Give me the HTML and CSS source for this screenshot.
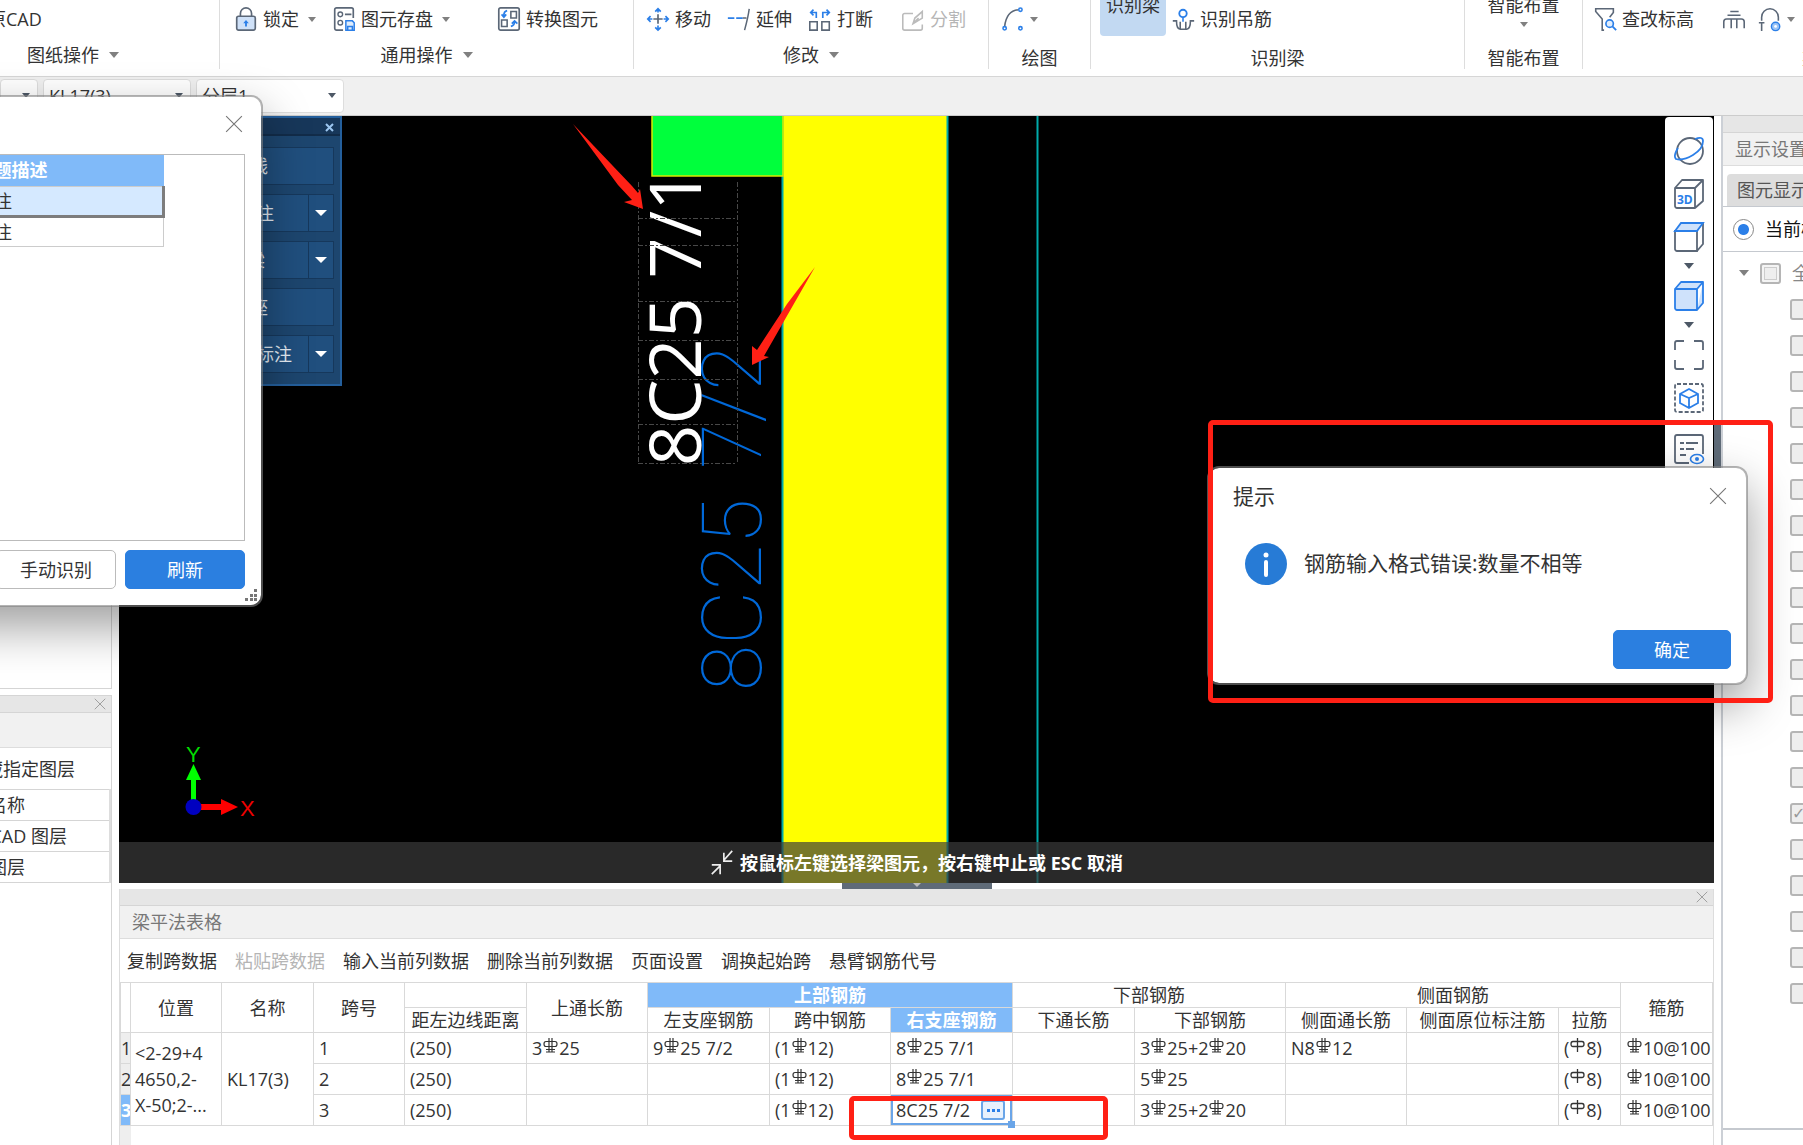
FILE: index.html
```html
<!DOCTYPE html>
<html lang="zh-CN">
<head>
<meta charset="utf-8">
<title>梁平法表格</title>
<link rel="stylesheet" href="styles.css">
</head>
<body>
<svg class="defs" aria-hidden="true">
  <symbol id="bar-c" viewBox="0 0 15 16"><path d="M3 3.500H12Q14 3.500 14 6T12 8.500H3Q1 8.500 1 6T3 3.500ZM6 0V14M9 0V14M3 11.500H12M3 14H12" fill="none" stroke="#333" stroke-width="1.200"/></symbol>
  <symbol id="bar-a" viewBox="0 0 15 16"><path d="M3 3.500H12Q14 3.500 14 6T12 8.500H3Q1 8.500 1 6T3 3.500ZM7.500 0V14" fill="none" stroke="#333" stroke-width="1.300"/></symbol>
  <symbol id="cross" viewBox="0 0 16 16"><path d="M1 1L15 15M15 1L1 15" fill="none" stroke="currentColor"/></symbol>
</svg>
<div class="app">
  <header class="ribbon">
    <section class="group g-paper">
      <div class="tools"><button class="tool">原CAD</button></div>
      <button class="caption">图纸操作<i class="tri big"></i></button>
    </section>
    <section class="group g-common">
      <div class="tools">
        <button class="tool"><svg class="ico" viewBox="0 0 24 28"><path d="M6 12V8a6 6 0 0 1 12 0v4" fill="none" stroke="#5b6777" stroke-width="1.800"/><rect x="2" y="11" width="20" height="15" rx="2" fill="#cfe1f8" stroke="#5b6777" stroke-width="1.800"/><path d="M12 15l3 3.500h-2V22h-2v-3.500H9z" fill="#2b7fe8"/></svg>锁定<i class="tri"></i></button>
        <button class="tool"><svg class="ico" viewBox="0 0 24 28"><path d="M11 26H4a2 2 0 0 1-2-2V4a2 2 0 0 1 2-2h16a2 2 0 0 1 2 2v9M13 9h7" fill="none" stroke="#5b6777" stroke-width="1.800"/><circle cx="8" cy="9" r="2.500" fill="none" stroke="#5b6777" stroke-width="1.500"/><circle cx="8" cy="18" r="2.500" fill="none" stroke="#5b6777" stroke-width="1.500"/><path d="M14 16h7l2 2v8h-9zM16 26v-4h5v4" fill="#e0edfc" stroke="#2b7fe8" stroke-width="1.600"/></svg>图元存盘<i class="tri"></i></button>
        <button class="tool t-convert"><svg class="ico" viewBox="0 0 24 28"><rect x="1" y="2" width="22" height="24" rx="2" fill="#fff" stroke="#5b6777" stroke-width="1.800"/><path d="M14 6h6v7h-6zM4 15h6v7H4z" fill="none" stroke="#5b6777" stroke-width="1.700"/><path d="M10 5Q6 6 6.500 11M4 9l2.500 3L9 9M14 22q4-1 4-5M15 19l3-3 3 3" fill="none" stroke="#2b7fe8" stroke-width="1.800"/></svg>转换图元</button>
      </div>
      <button class="caption">通用操作<i class="tri big"></i></button>
    </section>
    <section class="group g-modify">
      <div class="tools">
        <button class="tool"><svg class="ico" viewBox="0 0 24 28"><path d="M12 9v10M7 14h10" stroke="#5b6777" stroke-width="1.800"/><path d="M12 3v4M9 6l3-3 3 3M12 21v5M9 23l3 3 3-3M1.500 14H6M4 11l-3 3 3 3M18 14h5M20 11l3 3-3 3" fill="none" stroke="#2b7fe8" stroke-width="1.800"/></svg>移动</button>
        <button class="tool"><svg class="ico" viewBox="0 0 24 28"><path d="M0 13h7M9 13h7" stroke="#2b7fe8" stroke-width="1.800"/><path d="M23 3q-1 8-5 23M16 13h4" fill="none" stroke="#5b6777" stroke-width="1.600"/></svg>延伸</button>
        <button class="tool"><svg class="ico" viewBox="0 0 24 28"><path d="M1 17h8v9H1zM14 17h8v9h-8z" fill="none" stroke="#5b6777" stroke-width="1.700"/><path d="M8 13V7H2M5 4L2 7l3 3M15 13V7h7M19 4l3 3-3 3" fill="none" stroke="#2b7fe8" stroke-width="1.800"/></svg>打断</button>
        <button class="tool t-split" disabled><svg class="ico" viewBox="0 0 24 28"><path d="M12 8H3a2 2 0 0 0-2 2v14a2 2 0 0 0 2 2h17a2 2 0 0 0 2-2v-4M12 19l2-6 8-7v7zM12 19l6-6" fill="none" stroke="#bbb" stroke-width="1.700"/></svg>分割</button>
      </div>
      <button class="caption">修改<i class="tri big"></i></button>
    </section>
    <section class="group g-draw">
      <div class="tools"><button class="tool" aria-label="弧线"><svg class="ico" viewBox="0 0 24 28"><path d="M3 22Q5 5 18 4" fill="none" stroke="#5b6777" stroke-width="1.700"/><g fill="#fff" stroke="#2b7fe8" stroke-width="1.700"><circle cx="3" cy="24" r="1.800"/><circle cx="20" cy="4" r="1.800"/><circle cx="20" cy="24" r="1.800"/></g></svg><i class="tri"></i></button></div>
      <span class="caption low">绘图</span>
    </section>
    <section class="group g-identify">
      <div class="tools">
        <button class="tall active">识别梁</button>
        <button class="tool"><svg class="ico" viewBox="0 0 24 28"><circle cx="12" cy="8" r="4" fill="none" stroke="#2b7fe8" stroke-width="2"/><path d="M12 12v5" stroke="#2b7fe8" stroke-width="1.700"/><path d="M1 16h4q0 9 4 9h7q4 0 4-9h4M9 17v8M15 17v8" fill="none" stroke="#5b6777" stroke-width="1.700"/></svg>识别吊筋</button>
      </div>
      <span class="caption low">识别梁</span>
    </section>
    <section class="group g-smart">
      <div class="tools"><button class="tall">智能布置<i class="tri"></i></button></div>
      <span class="caption low">智能布置</span>
    </section>
    <section class="group g-second">
      <div class="tools">
        <button class="tool"><svg class="ico" viewBox="0 0 24 28"><path d="M11 26H9V14L2 6V3h19v4l-4 5" fill="none" stroke="#5b6777" stroke-width="1.700"/><circle cx="17" cy="19" r="4" fill="#e0edfc" stroke="#2b7fe8" stroke-width="1.800"/><path d="M20 22l4 4" stroke="#2b7fe8" stroke-width="2"/></svg>查改标高</button>
        <button class="tool" aria-label="支座"><svg class="ico" viewBox="0 0 24 28"><path d="M8 6h9M5 10h14M1 24V17q0-3 3-3h16q3 0 3 3v7M9 14v10M15 14v10" fill="none" stroke="#5b6777" stroke-width="1.700"/></svg></button>
        <button class="tool" aria-label="吊筋设置"><svg class="ico" viewBox="0 0 24 28"><path d="M3 16V12a9 9 0 0 1 18 0v4M0 18h6M3 18v9" fill="none" stroke="#5b6777" stroke-width="1.700"/><circle cx="18" cy="22" r="4.500" fill="#9cc4f5" stroke="#2b7fe8" stroke-width="1.500"/><circle cx="18" cy="22" r="1.500" fill="#fff"/></svg><i class="tri"></i></button>
      </div>
      <span class="caption low">梁</span>
    </section>
  </header>

  <nav class="pickers">
    <label class="picker"><select aria-label="构件类型"><option></option></select></label>
    <label class="picker"><select aria-label="构件"><option>KL17(3)</option></select></label>
    <label class="picker"><select aria-label="分层"><option>分层1</option></select></label>
  </nav>

  <main class="work">
    <aside class="left">
      <div class="list-box"></div>
      <section class="layers">
        <div class="strip"><button class="x" aria-label="关闭"><svg><use href="#cross"/></svg></button></div>
        <div class="blank"></div>
        <p class="layer-tool"><span>隐藏指定图层</span></p>
        <table class="layer-table">
          <tr><th><span>名称</span></th></tr>
          <tr><td><span class="wide">CAD 图层</span></td></tr>
          <tr><td><span>图层</span></td></tr>
        </table>
      </section>
    </aside>

    <div class="center">
      <section class="view">
        <svg class="scene">
          <rect x="664" width="164" height="100%" fill="#ff0"/>
          <path d="M663.500 0V2000M828.500 0V2000M918.500 0V2000" stroke="#0aa" stroke-width="2"/>
          <rect x="533" y="-1" width="131" height="61" fill="#00ff3c" stroke="#d8e800" stroke-width="1.500"/>
          <g class="cad-text">
            <text transform="translate(642 575) rotate(-90)">8C25</text>
            <text transform="translate(642 353) rotate(-90)">7/2</text>
          </g>
          <text class="note-text" transform="translate(582 350) rotate(-90)">8C25 7/1</text>
          <path d="M519.500 66V347M618.500 66V347M519 102.500H618M519 129.500H618M519 185.500H618M519 224.500H618M519 263.500H618M519 308.500H618M519 347.500H618" fill="none" stroke="#484848" stroke-dasharray="5 2 2 2"/>
          <path d="M454 8L513 70L519 77L521 73L524 93L505 86L513 84L499 69ZM696 151L645 240L650 241L633 249V230L638 234L668 188Z" fill="#ff2015"/>
        </svg>
        <svg class="axis" viewBox="0 0 100 90">
          <path d="M17 64V34H12L19.500 18L27 34H22V64Z" fill="#0f0"/>
          <path d="M20 58H47V53L64 61L47 69V64H20Z" fill="red"/>
          <circle cx="19.500" cy="61" r="8" fill="#0000c0"/>
          <text x="12" y="16" fill="#0d0">Y</text><text x="66" y="70" fill="#e00">X</text>
        </svg>
        <section class="command">
          <div class="command-head"><button aria-label="关闭"><svg viewBox="0 0 9 9"><path d="M1 1L8 8M8 1L1 8" stroke="#9cc6f0" stroke-width="2"/></svg></button></div>
          <div class="command-row"><button>梁边线</button></div>
          <div class="command-row"><button class="w2">自动标注</button><button class="drop" aria-label="更多"></button></div>
          <div class="command-row"><button class="w1">识别梁</button><button class="drop" aria-label="更多"></button></div>
          <div class="command-row"><button>编辑支座</button></div>
          <div class="command-row"><button class="w3">原位标注</button><button class="drop" aria-label="更多"></button></div>
        </section>
        <nav class="view-tools">
          <button aria-label="动态观察"><svg viewBox="0 0 32 32"><circle cx="17" cy="16" r="13" fill="none" stroke="#5b6777" stroke-width="1.800"/><path d="M22 4q8-3 8 2 0 8-10 14T3 24Q0 21 5 13" fill="none" stroke="#2b7fe8" stroke-width="1.800"/></svg></button>
          <button aria-label="三维"><svg viewBox="0 0 32 32"><path d="M2 10H22V30H4a2 2 0 0 1-2-2ZM2 10L9 2H30L22 10M30 2V23L22 30" fill="#fff" stroke="#5b6777" stroke-width="1.800" stroke-linejoin="round"/><text x="4" y="26">3D</text></svg></button>
          <button aria-label="俯视"><svg viewBox="0 0 32 32"><path d="M2 10H24V30H4a2 2 0 0 1-2-2ZM30 2V23L24 30" fill="#fff" stroke="#5b6777" stroke-width="1.800"/><path d="M2 10L8 2H30L24 10Z" fill="#cfe2fb" stroke="#2b7fe8" stroke-width="1.800"/></svg></button>
          <i class="tri dark"></i>
          <button aria-label="着色"><svg viewBox="0 0 32 32"><path d="M2 9H24V30H4a2 2 0 0 1-2-2ZM2 9L8 2H30L24 9M30 2V23L24 30" fill="#cfe2fb" stroke="#2b7fe8" stroke-width="1.800" stroke-linejoin="round"/></svg></button>
          <i class="tri dark"></i>
          <button aria-label="全屏"><svg viewBox="0 0 32 32"><path d="M2 11V4q0-2 2-2h7M21 2h7q2 0 2 2v7M30 21v7q0 2-2 2h-7M11 30H4q-2 0-2-2v-7" fill="none" stroke="#5b6777" stroke-width="1.800"/></svg></button>
          <button class="last" aria-label="局部三维"><svg viewBox="0 0 32 32"><rect x="2" y="2" width="28" height="28" rx="2" fill="none" stroke="#5b6777" stroke-width="1.800" stroke-dasharray="4 2"/><path d="M16 7l9 5v9l-9 5-9-5v-9zM7 12l9 4 9-4M16 16v10" fill="none" stroke="#2b7fe8" stroke-width="1.800"/></svg></button>
          <button aria-label="显示列表"><svg viewBox="0 0 32 32"><path d="M16 30H4q-2 0-2-2V4q0-2 2-2h24q2 0 2 2v17M7 10h4M13 10h12M7 16h4M13 16h8M7 22h6" fill="none" stroke="#5b6777" stroke-width="1.800"/><ellipse cx="24" cy="26" rx="6.500" ry="4.500" fill="#fff" stroke="#2b7fe8" stroke-width="1.600"/><circle cx="24" cy="26" r="2" fill="#2b7fe8"/></svg></button>
        </nav>
        <p class="prompt"><svg viewBox="0 0 24 28"><path d="M23 1L14 11M14 3v9h9M1 26l9-9M1 16h9v10" fill="none" stroke="#eee" stroke-width="1.800"/></svg>按鼠标左键选择梁图元，按右键中止或 ESC 取消</p>
      </section>
      <div class="grip-h"></div>
      <section class="sheet">
        <div class="strip"><button class="x" aria-label="关闭"><svg><use href="#cross"/></svg></button></div>
        <h2>梁平法表格</h2>
        <div class="actions">
          <button>复制跨数据</button><button disabled>粘贴跨数据</button><button>输入当前列数据</button><button>删除当前列数据</button><button>页面设置</button><button>调换起始跨</button><button>悬臂钢筋代号</button>
        </div>
        <table class="rebar">
          <colgroup><col class="c10"><col class="c91"><col class="c92"><col class="c91"><col class="c122"><col class="c121"><col class="c122"><col class="c121"><col class="c122"><col class="c122"><col class="c151"><col class="c121"><col class="c152"><col class="c62"><col class="c92"><col></colgroup>
          <thead>
            <tr class="h1"><th rowspan="2"></th><th rowspan="2">位置</th><th rowspan="2">名称</th><th rowspan="2">跨号</th><th></th><th rowspan="2">上通长筋</th><th colspan="3" class="on">上部钢筋</th><th colspan="2">下部钢筋</th><th colspan="3">侧面钢筋</th><th rowspan="2">箍筋</th><th rowspan="2"></th></tr>
            <tr class="h2"><th>距左边线距离</th><th>左支座钢筋</th><th>跨中钢筋</th><th class="on">右支座钢筋</th><th>下通长筋</th><th>下部钢筋</th><th>侧面通长筋</th><th>侧面原位标注筋</th><th>拉筋</th></tr>
          </thead>
          <tbody>
            <tr><th>1</th><td rowspan="3" class="place">&lt;2-29+4<br>4650,2-<br>X-50;2-...</td><td rowspan="3">KL17(3)</td><td>1</td><td>(250)</td><td>3<svg><use href="#bar-c"/></svg>25</td><td>9<svg><use href="#bar-c"/></svg>25 7/2</td><td>(1<svg><use href="#bar-c"/></svg>12)</td><td>8<svg><use href="#bar-c"/></svg>25 7/1</td><td></td><td>3<svg><use href="#bar-c"/></svg>25+2<svg><use href="#bar-c"/></svg>20</td><td>N8<svg><use href="#bar-c"/></svg>12</td><td></td><td>(<svg><use href="#bar-a"/></svg>8)</td><td><svg><use href="#bar-c"/></svg>10@100</td><td></td></tr>
            <tr><th>2</th><td>2</td><td>(250)</td><td></td><td></td><td>(1<svg><use href="#bar-c"/></svg>12)</td><td>8<svg><use href="#bar-c"/></svg>25 7/1</td><td></td><td>5<svg><use href="#bar-c"/></svg>25</td><td></td><td></td><td>(<svg><use href="#bar-a"/></svg>8)</td><td><svg><use href="#bar-c"/></svg>10@100</td><td></td></tr>
            <tr><th class="on">3</th><td>3</td><td>(250)</td><td></td><td></td><td>(1<svg><use href="#bar-c"/></svg>12)</td><td class="editing"><div class="editor"><input aria-label="右支座钢筋" value="8C25 7/2"><button aria-label="更多"><i></i><i></i><i></i></button></div></td><td></td><td>3<svg><use href="#bar-c"/></svg>25+2<svg><use href="#bar-c"/></svg>20</td><td></td><td></td><td>(<svg><use href="#bar-a"/></svg>8)</td><td><svg><use href="#bar-c"/></svg>10@100</td><td></td></tr>
          </tbody>
        </table>
        <div class="sheet-rest"></div>
      </section>
    </div>

    <div class="grip-v"></div>

    <aside class="right">
      <div class="strip"></div>
      <h2>显示设置</h2>
      <div class="tabs"><button>图元显示</button></div>
      <label class="scope"><input type="radio" name="scope" checked>当前楼层</label>
      <div class="tree">
        <label class="root"><i class="tri"></i><input type="checkbox">全部构件</label>
        <label><input type="checkbox"></label><label><input type="checkbox"></label><label><input type="checkbox"></label><label><input type="checkbox"></label><label><input type="checkbox"></label>
        <label><input type="checkbox"></label><label><input type="checkbox"></label><label><input type="checkbox"></label><label><input type="checkbox"></label><label><input type="checkbox"></label>
        <label><input type="checkbox"></label><label><input type="checkbox"></label><label><input type="checkbox"></label><label><input type="checkbox"></label><label><input type="checkbox" checked></label>
        <label><input type="checkbox"></label><label><input type="checkbox"></label><label><input type="checkbox"></label><label><input type="checkbox"></label><label><input type="checkbox"></label>
      </div>
    </aside>
  </main>

  <section class="dialog check" role="dialog" aria-label="校核">
    <header><button class="close" aria-label="关闭"><svg><use href="#cross"/></svg></button></header>
    <div class="issues">
      <table>
        <tr><th>问题描述</th></tr>
        <tr class="picked"><td>未标注</td></tr>
        <tr><td>未标注</td></tr>
      </table>
    </div>
    <footer><button class="btn">手动识别</button><button class="btn primary">刷新</button></footer>
    <svg class="resize" viewBox="0 0 13 13"><path d="M9 0h3v3H9zM5 5h3v3H5zM9 5h3v3H9zM0 9h3v3H0zM5 9h3v3H5zM9 9h3v3H9z" fill="#777"/></svg>
  </section>

  <section class="dialog alert" role="alertdialog" aria-label="提示">
    <header><h1>提示</h1><button class="close" aria-label="关闭"><svg><use href="#cross"/></svg></button></header>
    <div class="message"><svg viewBox="0 0 42 42"><circle cx="21" cy="21" r="21" fill="#277bd6"/><circle cx="21" cy="12" r="2.500" fill="#fff"/><rect x="19" y="17" width="4" height="17" rx="2" fill="#fff"/></svg><p>钢筋输入格式错误:数量不相等</p></div>
    <footer><button class="btn primary">确定</button></footer>
  </section>

  <div class="mark mark-alert"></div>
  <div class="mark mark-cell"></div>
</div>
</body>
</html>
```
FILE: styles.css
```css
* { box-sizing: border-box; }
body {
  margin: 0;
  font: 18px/24px "Open Sans", "Noto Sans CJK SC", sans-serif;
  color: #333;
  background: #fff;
}
button, input, select {
  font: inherit;
  color: inherit;
  background: none;
  border: 0;
  padding: 0;
  margin: 0;
  white-space: nowrap;
}
h1, h2, p { margin: 0; font-weight: 400; }
.defs { position: absolute; width: 0; height: 0; }
.app {
  position: relative;
  display: flex;
  flex-direction: column;
  min-height: 100vh;
  overflow: hidden;
}

/* ribbon */
.ribbon { display: flex; height: 77px; border-bottom: 1px solid #d6d6d6; overflow: hidden; }
.group {
  flex: none;
  height: 69px;
  display: flex;
  flex-direction: column;
  align-items: center;
  border-right: 1px solid #ddd;
}
.g-paper { width: 220px; }
.g-common { width: 414px; }
.g-modify { width: 355px; }
.g-draw { width: 102px; }
.g-identify { width: 374px; }
.g-smart { width: 118px; }
.g-second { width: 456px; border: 0; }
.tools { display: flex; flex: none; height: 40px; width: 100%; padding-left: 12px; gap: 16px; }
.g-paper .tools { padding: 0; }
.g-paper .tool { margin-left: -12px; }
.g-paper .caption { align-self: flex-start; margin-left: 27px; }
.g-common .tools { padding-left: 14px; }
.g-common .tri { margin-left: 4px; }
.g-identify .tools { padding-left: 9px; gap: 5px; }
.g-smart .tools { padding: 0; justify-content: center; }
.g-second .tools { gap: 12px; padding-left: 10px; }
.g-second .tool:nth-child(2) { margin-left: 16px; }
.tool { display: flex; align-items: center; gap: 5px; height: 38px; }
.t-convert { margin-left: 31px; }
.t-split { margin-left: 12px; color: #b5b5b5; }
.ico { width: 24px; height: 26px; flex: none; }
.caption { display: flex; flex: none; align-items: center; gap: 10px; height: 30px; }
.caption.low { height: 36px; }
.tall {
  display: flex;
  flex-direction: column;
  align-items: center;
  gap: 12px;
  height: 36px;
  padding: 0 6px;
  line-height: 10px;
  border-radius: 0 0 4px 4px;
}
.tall.active { background: #c2d9f2; }
.tri {
  flex: none;
  width: 0;
  height: 0;
  border: 4px solid transparent;
  border-top: 5px solid #808080;
  border-bottom: 0;
}
.tri.big { border-width: 6px 5px 0; margin: 0; }
.tri.dark { border-width: 6px 5px 0; border-top-color: #4d5866; }

/* pickers */
.pickers { display: flex; gap: 5px; height: 39px; padding: 2px 0 4px; background: #f0f0f0; border-bottom: 1px solid #ccc; }
.picker { position: relative; width: 148px; }
.picker:first-child { width: 38px; }
.picker select {
  appearance: none;
  width: 100%;
  height: 34px;
  padding: 0 5px;
  background: #fff;
  border: 1px solid #ddd;
  border-radius: 4px;
}
.picker::after {
  content: "";
  position: absolute;
  right: 8px;
  top: 14px;
  border: 4px solid transparent;
  border-top: 5px solid #4d5866;
  border-bottom: 0;
}

/* work area */
.work { flex: 1; display: flex; }
.left { width: 112px; flex: none; margin-right: 7px; display: flex; flex-direction: column; gap: 6px; overflow: hidden; }
.list-box { height: 573px; border: 1px solid #d5d5d5; border-left: 0; }
.strip { height: 17px; background: #e6e6e6; border-bottom: 1px solid #d5d5d5; display: flex; justify-content: flex-end; align-items: center; padding-right: 5px; flex: none; }
.x { height: 12px; width: 12px; color: #888; display: flex; }
.x svg { width: 12px; height: 12px; }
.layers { flex: 1; border: 1px solid #d5d5d5; border-width: 1px 1px 0 0; }
.blank { height: 35px; background: #f1f1f1; border-bottom: 1px solid #ddd; }
.layer-tool { height: 41px; width: 75px; display: flex; align-items: center; justify-content: flex-end; white-space: nowrap; }
.layer-table { width: 111px; table-layout: fixed; border-collapse: collapse; border-top: 1px solid #d5d5d5; }
.layer-table th, .layer-table td { height: 31px; padding: 0; font-weight: 400; text-align: left; border: 1px solid #d5d5d5; border-left: 0; border-right: 2px solid #ddd; }
.layer-table span { display: flex; justify-content: flex-end; width: 25px; white-space: nowrap; }
.layer-table .wide { width: 67px; }
.center { flex: 1; min-width: 0; display: flex; flex-direction: column; }
.view { position: relative; flex: 1; min-height: 600px; background: #000; overflow: hidden; }
.scene { position: absolute; inset: 0; width: 100%; height: 100%; }
.cad-text text { font: 100 84px "Roboto", sans-serif; fill: #0068d8; }
.note-text { font-family: "Open Sans", sans-serif; font-weight: 500; font-size: 72px; fill: #fff; }
.axis { position: absolute; left: 55px; bottom: 47px; width: 100px; height: 90px; font-family: "Liberation Sans", sans-serif; font-size: 22px; }
.command { position: absolute; left: 0; top: 0; width: 223px; height: 270px; background: #1d466f; border: 2px solid #245f9c; }
.command-head { height: 18px; background: #17375a; border-bottom: 2px solid #122c49; display: flex; justify-content: flex-end; padding: 5px 6px 0 0; margin-bottom: 11px; }
.command-head button { width: 9px; height: 9px; display: flex; }
.command-head svg { width: 9px; height: 9px; }
.command-row { display: flex; height: 38px; width: 209px; margin: 0 0 9px 4px; background: #204f7e; border: 1px solid #16385c; color: #e6edf5; }
.command-row button { flex: 1; text-align: right; padding-right: 65px; }
.command-row .w1 { padding-right: 43px; }
.command-row .w2 { padding-right: 34px; }
.command-row .w3 { padding-right: 16px; }
.command-row .drop { flex: 0 0 25px; padding: 0; border-left: 1px solid #16385c; display: flex; align-items: center; justify-content: center; }
.drop::after { content: ""; border: 6px solid transparent; border-top-color: #fff; border-bottom: 0; }
.view-tools { position: absolute; right: 1px; top: 1px; width: 48px; height: 500px; padding-top: 18px; background: #fff; border-radius: 4px 4px 0 0; display: flex; flex-direction: column; align-items: center; gap: 11px; }
.view-tools .tri { margin: -1px 0 0; }
.view-tools button { height: 32px; width: 32px; display: flex; }
.view-tools svg { width: 32px; height: 32px; font-weight: 700; font-size: 12px; fill: #2b7fe8; }
.view-tools .last { margin-bottom: 8px; }
.prompt { position: absolute; left: 0; right: 0; bottom: 0; height: 41px; background: rgba(59, 59, 59, .69); color: #fff; font-weight: 700; display: flex; align-items: center; justify-content: center; gap: 6px; }
.prompt svg { width: 24px; height: 26px; }
.grip-h { height: 6px; width: 150px; background: #5f6b78; align-self: center; display: flex; justify-content: center; }
.grip-h::after { content: ""; border: 4px solid transparent; border-top-color: #bbb; border-bottom: 0; }
.grip-v { width: 7px; flex: none; background: linear-gradient(#fff 309px, #5f6b78 309px, #5f6b78 460px, #fff 460px); }

/* beam sheet */
.sheet { border-left: 1px solid #ddd; border-right: 1px solid #ddd; }
.sheet h2, .right h2 { height: 33px; font-size: 18px; line-height: 32px; padding-left: 12px; background: #f1f1f1; border-bottom: 1px solid #ddd; color: #777; white-space: nowrap; }
.actions { display: flex; gap: 18px; height: 43px; padding-left: 7px; }
.actions button:disabled { color: #b5b5b5; }
.rebar { width: 100%; table-layout: fixed; border-collapse: collapse; }
.c10 { width: 10px; } .c62 { width: 62px; } .c91 { width: 91px; } .c92 { width: 92px; }
.c121 { width: 121px; } .c122 { width: 122px; } .c151 { width: 151px; } .c152 { width: 152px; }
.rebar th, .rebar td { border: 1px solid #d9d9d9; padding: 0; font-weight: 400; overflow: hidden; white-space: nowrap; }
.rebar td { padding: 0 0 0 5px; text-align: left; }
.h1 th, .h2 th { height: 25px; line-height: 24px; }
.rebar tbody tr { height: 31px; }
.rebar tbody th { background: #eee; }
.rebar tbody td svg { width: 15px; height: 16px; vertical-align: 1px; margin: 0 1px; }
.rebar .on, .rebar tbody .on { background: #80baf9; color: #fff; font-weight: 700; }
.rebar .place { line-height: 26px; padding: 0 0 0 4px; }
.rebar .editing { padding: 0; overflow: visible; }
.editor { position: relative; display: flex; align-items: center; gap: 4px; height: 30px; border: 2px solid #6aa5e8; padding: 0 5px 0 3px; }
.editor::after { content: ""; position: absolute; right: -5px; bottom: -5px; width: 7px; height: 7px; background: #6aa5e8; }
.editor input { flex: 1; min-width: 0; width: 80px; height: 24px; outline: 0; }
.editor button { display: flex; align-items: center; justify-content: center; gap: 2px; width: 24px; height: 20px; border: 2px solid #6aa5e8; border-radius: 3px; background: #e8f1fc; }
.editor button i { width: 3px; height: 3px; background: #2b7fe8; }
.sheet-rest { height: 19px; width: 11px; background: #eee; }

/* display settings */
.right { width: 82px; flex: none; border-left: 2px solid #ccd0d6; overflow: hidden; white-space: nowrap; }
.tabs { height: 41px; padding: 8px 0 0 4px; border-bottom: 1px solid #c5c9cf; }
.tabs button { height: 32px; width: 120px; padding-left: 10px; text-align: left; background: #ddd; border-radius: 4px 0 0 0; color: #555; }
.scope { display: flex; align-items: center; gap: 11px; height: 45px; padding-left: 10px; border-bottom: 1px solid #c5c9cf; color: #111; }
.scope input { appearance: none; flex: none; width: 21px; height: 21px; border: 1px solid #888; border-radius: 50%; background: radial-gradient(#2b7fe8 5px, #fff 6px); }
.tree { height: 878px; border-bottom: 2px solid #c5c9cf; padding-top: 3px; color: #888; }
.tree label { display: flex; align-items: center; height: 36px; padding-left: 67px; }
.tree .root { padding-left: 16px; gap: 11px; }
.tree .tri { border-width: 6px 5px 0; }
.tree input { appearance: none; flex: none; width: 21px; height: 21px; border: 2px solid #b5b5b5; border-radius: 3px; background: #eee; }
.root input { box-shadow: inset 0 0 0 2px #f4f4f4, inset 0 0 0 3px #ccc; }
.tree input:checked::before { content: "✓"; display: block; font: 700 16px/17px "DejaVu Sans", sans-serif; color: #999; }

/* floating windows */
.dialog { position: absolute; background: #fff; border: 2px solid rgba(130, 130, 130, .6); background-clip: padding-box; border-radius: 12px; box-shadow: 0 20px 48px rgba(0, 0, 0, .38); display: flex; flex-direction: column; }
.dialog header { display: flex; align-items: center; justify-content: flex-end; }
.close { width: 18px; height: 18px; color: #777; display: flex; }
.close svg { width: 18px; height: 18px; }
.btn { width: 120px; height: 39px; border: 1px solid #bbb; border-radius: 5px; background: #fff; }
.btn.primary { background: #2b7fe0; border-color: #2b7fe0; color: #fff; }
.check { left: -160px; top: 95px; width: 423px; height: 512px; padding: 0 16px 16px; }
.check header { height: 57px; padding: 0 2px 4px 0; }
.issues { flex: 1; border: 1px solid #bbb; }
.issues table { width: 306px; border-collapse: collapse; table-layout: fixed; }
.issues th { height: 31px; padding: 0; background: #80baf9; color: #fff; font-weight: 700; }
.issues td { height: 30px; padding: 0 0 0 98px; border: 1px solid #ccc; }
.issues .picked td { background: #d5e9ff; border-bottom: 3px solid #7d7d7d; border-right: 3px solid #7d7d7d; }
.check footer { display: flex; justify-content: flex-end; gap: 9px; padding-top: 9px; }
.resize { position: absolute; right: 3px; bottom: 3px; width: 13px; height: 13px; }
.alert { right: 55px; top: 466px; width: 541px; height: 219px; padding: 0 15px 14px 21px; font-size: 21px; }
.alert header { height: 55px; justify-content: space-between; }
.alert h1 { font-size: 21px; padding-left: 3px; }
.alert header .close { margin-right: 4px; }
.message { flex: 1; display: flex; gap: 17px; padding: 20px 0 0 15px; }
.message svg { width: 42px; height: 42px; flex: none; }
.message p { line-height: 40px; }
.alert footer { display: flex; justify-content: flex-end; font-size: 18px; }
.alert .btn { width: 118px; }

/* red highlight frames */
.mark { position: absolute; border: 5px solid #ff2015; border-radius: 5px; pointer-events: none; }
.mark-alert { right: 30px; top: 420px; width: 565px; height: 283px; }
.mark-cell { left: 849px; top: 1096px; width: 259px; height: 44px; }
```
